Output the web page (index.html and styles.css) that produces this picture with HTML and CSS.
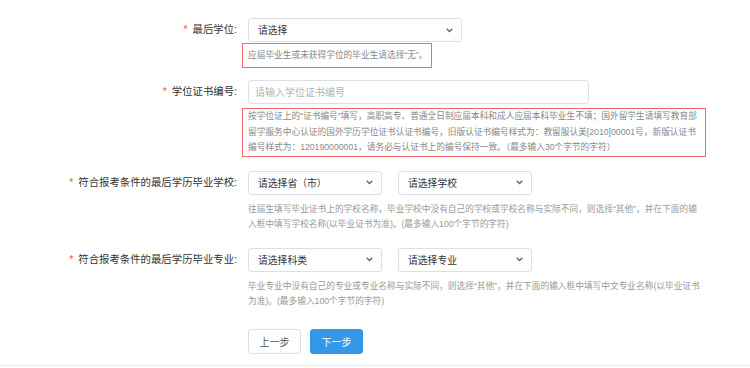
FILE: index.html
```html
<!DOCTYPE html>
<html lang="zh-CN">
<head>
    <meta charset="UTF-8">
    <meta name="viewport" content="width=device-width, initial-scale=1.0">
    <title>学历信息</title>
    <link rel="stylesheet" href="styles.css">
</head>
<body>
    <div class="form">
        <div class="form-item">
            <label class="label"><span class="star">*</span>最后学位:</label>
            <div class="control">
                <div class="select select-wide">
                    <span>请选择</span>
                    <svg class="arrow" width="7" height="5" viewBox="0 0 7 5"><path d="M0.7 0.8l2.8 2.8 2.8-2.8" fill="none" stroke="#666" stroke-width="1.4"/></svg>
                </div>
                <div class="tip tip-short">应届毕业生或未获得学位的毕业生请选择“无”。</div>
            </div>
        </div>

        <div class="form-item item-2">
            <label class="label"><span class="star">*</span>学位证书编号:</label>
            <div class="control">
                <input class="input" type="text" placeholder="请输入学位证书编号">
                <div class="tip tip-long">按学位证上的“证书编号”填写，高职高专、普通全日制应届本科和成人应届本科毕业生不填；国外留学生请填写教育部留学服务中心认证的国外学历学位证书认证书编号，旧版认证书编号样式为：教留服认美[2010]00001号，新版认证书编号样式为：120190000001，请务必与认证书上的编号保持一致。（最多输入30个字节的字符）</div>
            </div>
        </div>

        <div class="form-item item-3">
            <label class="label"><span class="star">*</span>符合报考条件的最后学历毕业学校:</label>
            <div class="control">
                <div class="select-group">
                    <div class="select">
                        <span>请选择省（市）</span>
                        <svg class="arrow" width="7" height="5" viewBox="0 0 7 5"><path d="M0.7 0.8l2.8 2.8 2.8-2.8" fill="none" stroke="#666" stroke-width="1.4"/></svg>
                    </div>
                    <div class="select">
                        <span>请选择学校</span>
                        <svg class="arrow" width="7" height="5" viewBox="0 0 7 5"><path d="M0.7 0.8l2.8 2.8 2.8-2.8" fill="none" stroke="#666" stroke-width="1.4"/></svg>
                    </div>
                </div>
                <div class="help">往届生填写毕业证书上的学校名称，毕业学校中没有自己的学校或学校名称与实际不同，则选择“其他”，并在下面的输入框中填写学校名称(以毕业证书为准)。(最多输入100个字节的字符)</div>
            </div>
        </div>

        <div class="form-item item-4">
            <label class="label"><span class="star">*</span>符合报考条件的最后学历毕业专业:</label>
            <div class="control">
                <div class="select-group">
                    <div class="select">
                        <span>请选择科类</span>
                        <svg class="arrow" width="7" height="5" viewBox="0 0 7 5"><path d="M0.7 0.8l2.8 2.8 2.8-2.8" fill="none" stroke="#666" stroke-width="1.4"/></svg>
                    </div>
                    <div class="select">
                        <span>请选择专业</span>
                        <svg class="arrow" width="7" height="5" viewBox="0 0 7 5"><path d="M0.7 0.8l2.8 2.8 2.8-2.8" fill="none" stroke="#666" stroke-width="1.4"/></svg>
                    </div>
                </div>
                <div class="help">毕业专业中没有自己的专业或专业名称与实际不同，则选择“其他”，并在下面的输入框中填写中文专业名称(以毕业证书为准)。(最多输入100个字节的字符)</div>
            </div>
        </div>

        <div class="actions">
            <button class="btn">上一步</button>
            <button class="btn btn-primary">下一步</button>
        </div>
    </div>
</body>
</html>
```

FILE: styles.css
```css
* {
    margin: 0;
    padding: 0;
    box-sizing: border-box;
}

body {
    font-family: "Liberation Sans", "Noto Sans CJK SC", sans-serif;
    font-size: 10.4px;
    color: #333;
    background: white;
}

.form {
    padding-top: 18px;
    height: 366px;
    border-bottom: 1px solid #ebebeb;
}

.form-item {
    display: grid;
    grid-template-columns: 248px 1fr;
}

.item-2 {
    margin-top: 12px;
}

.item-3 {
    margin-top: 14px;
}

.item-4 {
    margin-top: 15px;
}

.label {
    text-align: right;
    padding-right: 11px;
    height: 24px;
    line-height: 24px;
    color: #333;
}

.star {
    color: #f0502a;
    margin-right: 5px;
}

.select {
    width: 134px;
    height: 24px;
    border: 1px solid #dcdfe6;
    border-radius: 3px;
    display: flex;
    align-items: center;
    justify-content: space-between;
    padding: 0 8px 0 9px;
    font-size: 9.8px;
    color: #333;
    background: white;
}

.select-wide {
    width: 214px;
}

.select-group {
    display: flex;
    gap: 16px;
}

.arrow {
    flex-shrink: 0;
}

.input {
    width: 341px;
    height: 24px;
    border: 1px solid #dcdfe6;
    border-radius: 3px;
    padding: 0 6px;
    font-family: inherit;
    font-size: 10px;
    color: #333;
    outline: none;
}

.input::placeholder {
    color: #b4b4b4;
}

.tip {
    margin-left: -6px;
    border: 1px solid #f26a6a;
    font-size: 8.7px;
    color: #888;
    padding: 0 5px;
}

.tip-short {
    width: 190px;
    height: 25px;
    line-height: 23px;
    margin-top: 1px;
    white-space: nowrap;
}

.tip-long {
    width: 464px;
    margin-top: 4px;
    line-height: 15.5px;
    padding: 0 2px 0 5px;
}

.help {
    width: 455px;
    margin-top: 7px;
    font-size: 8.7px;
    line-height: 15.5px;
    color: #999;
}

.actions {
    margin-top: 19px;
    padding-left: 248px;
    display: flex;
    gap: 9px;
}

.btn {
    height: 25px;
    width: 53px;
    border: 1px solid #dcdfe6;
    border-radius: 3px;
    background: white;
    color: #555;
    font-family: inherit;
    font-size: 10px;
}

.btn-primary {
    background: #3498e8;
    border-color: #3498e8;
    color: white;
}
```
